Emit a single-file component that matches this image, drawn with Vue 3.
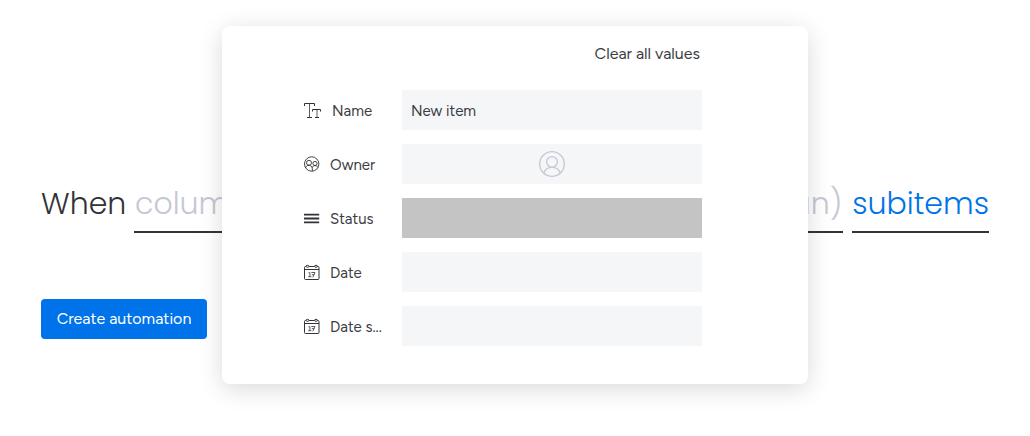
<script setup>
import { ref } from 'vue'

const name = ref('New item')
const fields = [
  { id: 'name', label: 'Name', icon: 'text', kind: 'input' },
  { id: 'owner', label: 'Owner', icon: 'people', kind: 'person' },
  { id: 'status', label: 'Status', icon: 'status', kind: 'status' },
  { id: 'date', label: 'Date', icon: 'date', kind: 'button' },
  { id: 'date-s', label: 'Date s...', icon: 'date', kind: 'button' },
]
</script>

<template>
  <main class="page">
    <div class="sentence">
      <span class="when">When</span>
      <a class="slot condition" href="#"><span>column</span><span>than)</span></a>
      <a class="slot subitems" href="#">subitems</a>
    </div>
    <button class="create" type="button">Create automation</button>

    <section class="dialog" role="dialog" aria-label="Item values">
      <button class="clear" type="button">Clear all values</button>
      <div class="rows">
        <div v-for="f in fields" :key="f.id" class="row">
          <label class="label" :for="f.id">
            <svg v-if="f.icon === 'text'" width="18" height="16" viewBox="0 -1 18 16" fill="none" stroke="#323338">
              <path d="M.5 3V.5h10V3M3 14.500h5M8.500 8.500v-2h8v2M11 14.500h4" />
              <path d="M5.500.5v14M13 6.500v8" stroke-width=".8" />
            </svg>
            <svg v-else-if="f.icon === 'people'" width="16" height="16" viewBox="0 0 16 16" fill="none" stroke="#323338" stroke-width=".9">
              <circle cx="7.700" cy="8" r="7.200" />
              <circle cx="5" cy="6.800" r="2.500" />
              <circle cx="11" cy="7.500" r="2.100" />
              <path d="M1.400 12C2 10 3.300 9.300 5 9.300S8.300 10.500 8.300 12.500v2.700M8.200 11.700C8.800 10.200 9.700 9.600 11 9.600s2.400.6 3 1.800" />
            </svg>
            <svg v-else-if="f.icon === 'status'" width="16" height="16" viewBox="0 0 16 16" fill="none" stroke="#323338" stroke-width="1.800">
              <path d="M0 4.700h15.200M0 8.500h15.200M0 12.300h15.200" />
            </svg>
            <svg v-else width="16" height="16" viewBox="0 0 16 16" fill="none" stroke="#323338">
              <path d="M2 2.500H1.500a1 1 0 0 0-1 1v11a1 1 0 0 0 1 1h12.500a1 1 0 0 0 1-1v-11a1 1 0 0 0-1-1h-.5M5 2.500h5.500M.5 5.500h14.500" />
              <ellipse cx="3.500" cy="2.300" rx="1.500" ry="1" />
              <ellipse cx="12" cy="2.300" rx="1.500" ry="1" />
              <path d="M4.500 8.700h1.400v4M4.200 12.700h3.200M7.300 8.500h3.700L8.800 13.300M7.800 10.700h2.400" stroke-width=".8" />
            </svg>
            <span class="caption">{{ f.label }}</span>
          </label>
          <input v-if="f.kind === 'input'" :id="f.id" v-model="name" class="field" type="text" />
          <button v-else :id="f.id" class="field" :class="f.kind" type="button">
            <svg v-if="f.kind === 'person'" width="26" height="26" viewBox="0 0 26 26" fill="none" stroke="#c5c7d4" stroke-width="1.300">
              <circle cx="13" cy="13" r="12.300" />
              <circle cx="13" cy="11" r="5.400" />
              <path d="M4.800 22C6 18.500 9 16.400 13 16.400s7 2.100 8.200 5.600" />
            </svg>
          </button>
        </div>
      </div>
    </section>
  </main>
</template>

<style>
body {
  background: #fff;
}
</style>

<style scoped>
.page {
  position: relative;
  box-sizing: border-box;
  min-height: 100vh;
  padding: 177px 41px 0;
  color: #323338;
  font-family: Figtree, Lato, "Liberation Sans", sans-serif;
  font-size: 16px;
  line-height: 20px;
}
button,
input {
  margin: 0;
  padding: 0;
  border: 0;
  border-radius: 0;
  color: inherit;
  font: inherit;
}
.sentence {
  display: flex;
  font-family: Poppins, Inter, "Liberation Sans", sans-serif;
  font-size: 30px;
  font-weight: 300;
  line-height: 54px;
  white-space: nowrap;
}
.when {
  flex: 0 0 93px;
}
.slot {
  border-bottom: 2px solid #323338;
  text-decoration: none;
}
.condition {
  display: flex;
  flex: 1;
  justify-content: space-between;
  margin-right: 9px;
  padding: 0 1px;
  color: #c5c7d4;
}
.subitems {
  color: #0073ea;
}
.create {
  min-width: 166px;
  height: 40px;
  margin-top: 66px;
  padding: 0 15px;
  border-radius: 4px;
  background: #0073ea;
  color: #fff;
}
.dialog {
  position: absolute;
  top: 26px;
  left: 50%;
  box-sizing: border-box;
  display: flex;
  flex-direction: column;
  width: 586px;
  max-width: 100%;
  padding: 18px 106px 38px 82px;
  border-radius: 8px;
  background: #fff;
  box-shadow: 0 5px 25px rgba(0, 0, 0, 0.15);
  color: #3c3d43;
  transform: translateX(-50%);
}
.clear {
  align-self: flex-end;
  margin-right: 2px;
  background: none;
}
.rows {
  display: grid;
  gap: 14px;
  margin-top: 26px;
}
.row {
  display: grid;
  grid-template-columns: 98px 1fr;
}
.label {
  display: flex;
  align-items: center;
  gap: 10px;
  font-size: 15px;
  white-space: nowrap;
}
.caption {
  padding-top: 2px;
}
.field {
  box-sizing: border-box;
  width: 100%;
  height: 40px;
  padding: 2px 9px 0;
  background: #f5f6f8;
  font-size: 15px;
}
.person {
  display: flex;
  align-items: center;
  justify-content: center;
  padding: 0;
}
.status {
  background: #c4c4c4;
}
</style>
